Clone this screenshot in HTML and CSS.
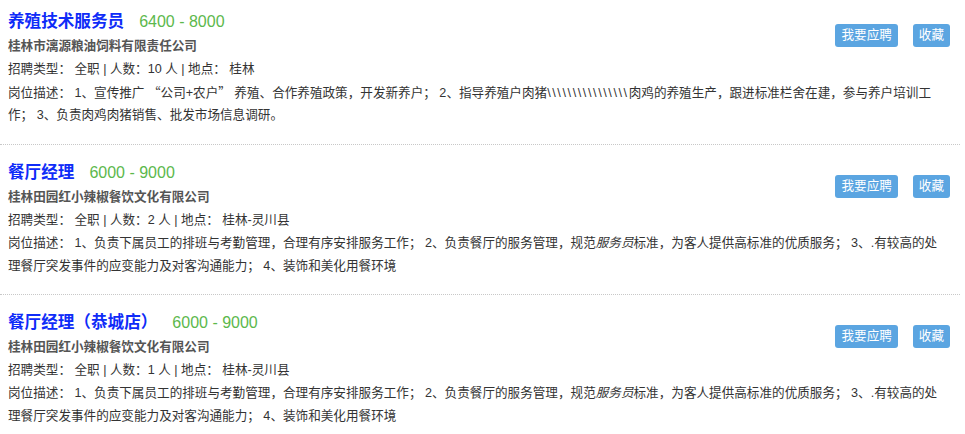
FILE: index.html
```html
<!DOCTYPE html>
<html lang="zh-CN">
<head>
    <meta charset="UTF-8">
    <meta name="viewport" content="width=device-width, initial-scale=1.0">
    <title>招聘信息</title>
    <link rel="stylesheet" href="styles.css">
</head>
<body>
    <div class="job-list">
        <div class="job">
            <div class="job-head">
                <div class="job-main">
                    <h2 class="job-title">养殖技术服务员<span class="salary">6400 - 8000</span></h2>
                    <p class="company">桂林市漓源粮油饲料有限责任公司</p>
                    <p class="meta">招聘类型： 全职 | 人数：10 人 | 地点： 桂林</p>
                </div>
                <div class="actions">
                    <button class="btn">我要应聘</button>
                    <button class="btn">收藏</button>
                </div>
            </div>
            <p class="desc">岗位描述： 1、宣传推广 <span class="cjk">“</span>公司+农户<span class="cjk">”</span> 养殖、合作养殖政策，开发新养户； 2、指导养殖户肉猪<span class="slashes">\\\\\\\\\\\\\\\\</span>肉鸡的养殖生产，跟进标准栏舍在建，参与养户培训工作； 3、负责肉鸡肉猪销售、批发市场信息调研。</p>
        </div>

        <div class="job">
            <div class="job-head">
                <div class="job-main">
                    <h2 class="job-title">餐厅经理<span class="salary">6000 - 9000</span></h2>
                    <p class="company">桂林田园红小辣椒餐饮文化有限公司</p>
                    <p class="meta">招聘类型： 全职 | 人数：2 人 | 地点： 桂林-灵川县</p>
                </div>
                <div class="actions">
                    <button class="btn">我要应聘</button>
                    <button class="btn">收藏</button>
                </div>
            </div>
            <p class="desc">岗位描述： 1、负责下属员工的排班与考勤管理，合理有序安排服务工作； 2、负责餐厅的服务管理，规范<i>服务员</i>标准，为客人提供高标准的优质服务； 3、.有较高的处理餐厅突发事件的应变能力及对客沟通能力； 4、装饰和美化用餐环境</p>
        </div>

        <div class="job">
            <div class="job-head">
                <div class="job-main">
                    <h2 class="job-title">餐厅经理（恭城店）<span class="salary">6000 - 9000</span></h2>
                    <p class="company">桂林田园红小辣椒餐饮文化有限公司</p>
                    <p class="meta">招聘类型： 全职 | 人数：1 人 | 地点： 桂林-灵川县</p>
                </div>
                <div class="actions">
                    <button class="btn">我要应聘</button>
                    <button class="btn">收藏</button>
                </div>
            </div>
            <p class="desc">岗位描述： 1、负责下属员工的排班与考勤管理，合理有序安排服务工作； 2、负责餐厅的服务管理，规范<i>服务员</i>标准，为客人提供高标准的优质服务； 3、.有较高的处理餐厅突发事件的应变能力及对客沟通能力； 4、装饰和美化用餐环境</p>
        </div>
    </div>
</body>
</html>
```

FILE: styles.css
```css
/* Page */
body {
    margin: 0;
    background-color: #fff;
    font-family: "Liberation Sans", "Noto Sans CJK SC", sans-serif;
    font-size: 12.6px;
    color: #333;
    overflow: hidden;
}

.job-list {
    width: 960px;
}

/* One job posting */
.job {
    padding: 15px 10px 17px 8px;
    border-bottom: 1px dotted #c8c8c8;
}

.job:first-child {
    padding-top: 9px;
}

.job-head {
    display: flex;
    justify-content: space-between;
    align-items: flex-start;
}

.job-title {
    margin: 0;
    font-size: 16.6px;
    line-height: 25px;
    font-weight: bold;
    color: #0f2cf8;
}

.salary {
    margin-left: 15px;
    font-weight: normal;
    font-size: 16px;
    color: #5cb84c;
}

.company {
    margin: 0;
    line-height: 24px;
    font-weight: bold;
    color: #555;
}

.meta,
.desc {
    margin: 0;
    line-height: 22.7px;
}

.desc {
    padding-right: 10px;
}

.desc i {
    font-style: italic;
}

.cjk {
    font-family: "Noto Sans CJK SC", sans-serif;
}

.slashes {
    letter-spacing: 1.6px;
}

/* Buttons */
.actions {
    display: flex;
    gap: 15px;
    margin-top: 15px;
}

.btn {
    height: 23px;
    padding: 0 6px;
    border: none;
    border-radius: 3px;
    background-color: #5ba5e1;
    color: #fff;
    font-family: inherit;
    font-size: 12.6px;
    line-height: 23px;
    cursor: pointer;
}
```
